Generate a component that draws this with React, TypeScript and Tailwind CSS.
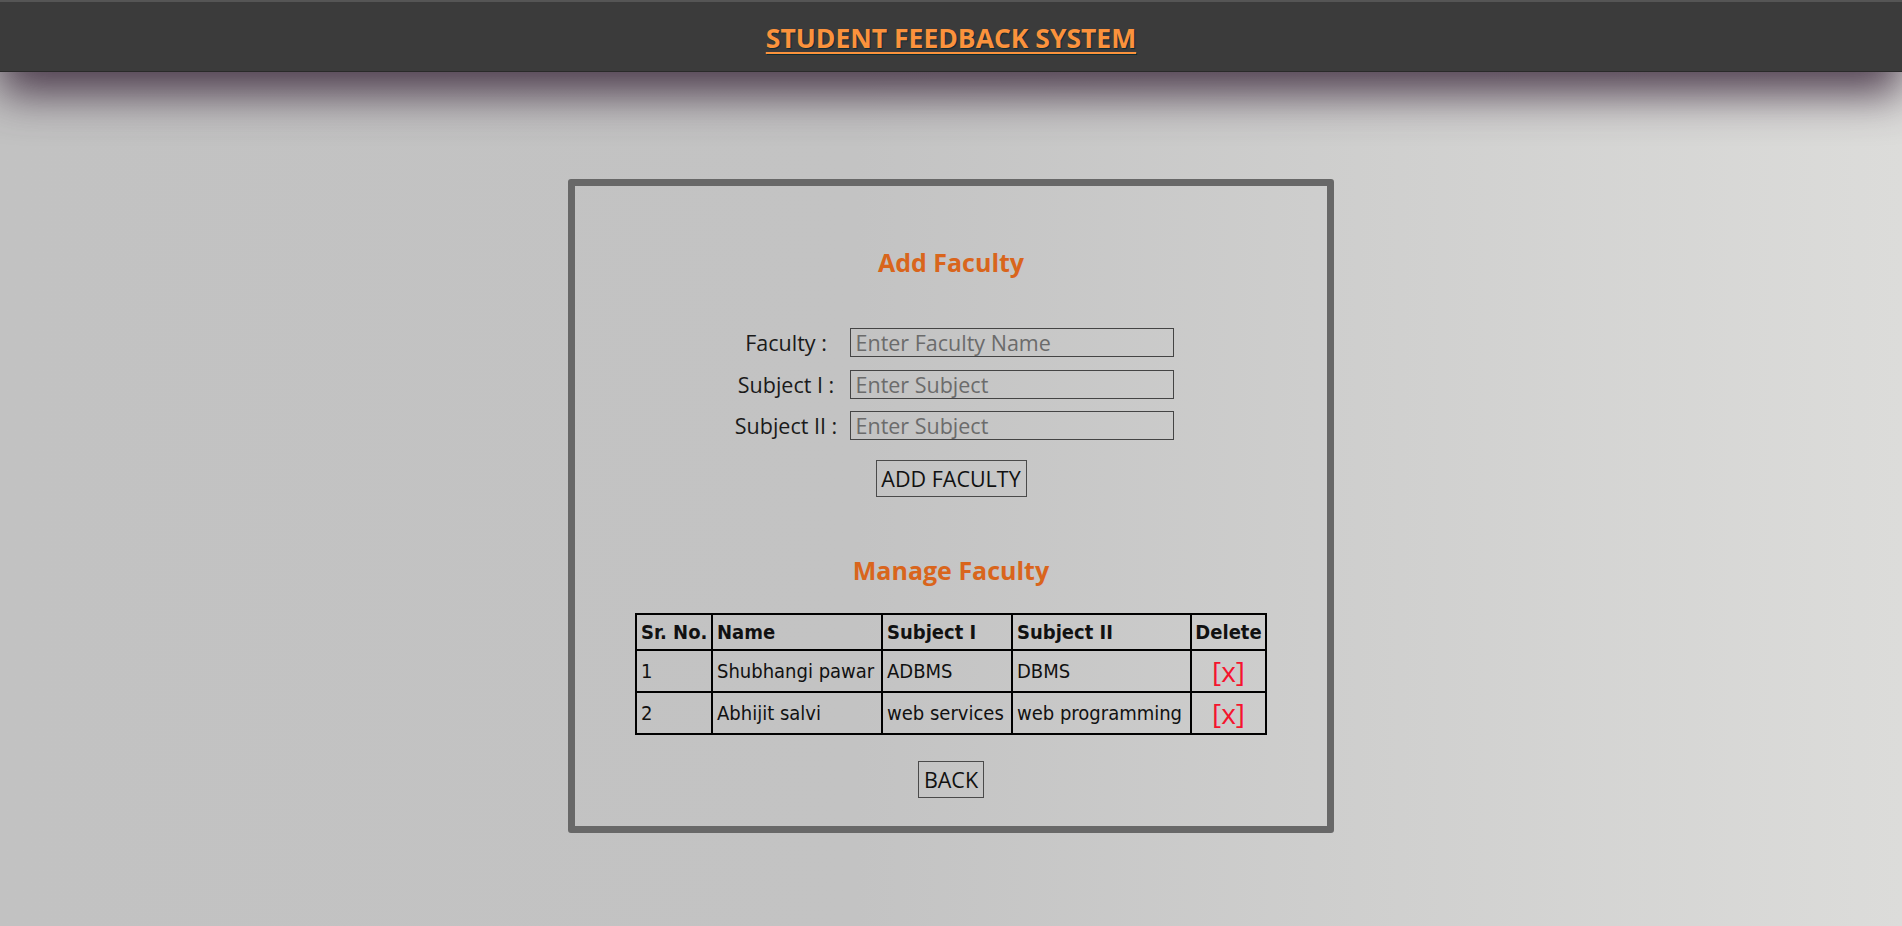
import React from "react";

const rows = [
  { n: "1", name: "Shubhangi pawar", s1: "ADBMS", s2: "DBMS" },
  { n: "2", name: "Abhijit salvi", s1: "web services", s2: "web programming" },
];

export default function App() {
  return (
    <div className="min-h-[926px] w-full bg-[linear-gradient(to_right,#c2c2c2_0%,#c3c3c3_45%,#dcdcda_100%)] font-['Open_Sans',sans-serif] overflow-hidden">
      <header className="relative z-10 h-[72px] bg-[#3b3b3b] border-t-[2px] border-t-[#555555] border-b border-b-[#2a2a2a] shadow-[0_22px_44px_rgba(58,38,58,0.85)] flex items-center justify-center">
        <h1 className="text-[26.5px] leading-[35px] font-bold text-[#fb923c] underline decoration-2 underline-offset-[4px] [text-shadow:1px_1px_1px_#0d2a30] mt-[4px]">
          STUDENT FEEDBACK SYSTEM
        </h1>
      </header>

      <main className="flex justify-center">
        <section className="mt-[107px] w-[766px] border-[7px] border-[#686868] rounded-[3px] flex flex-col items-center pb-[28px]">
          <h2 className="mt-[59px] text-[25px] leading-[34px] font-bold text-[#d9651c]">Add Faculty</h2>

          <div className="mt-[49px] grid grid-cols-[115px_324px] gap-x-[6px] gap-y-[12.5px] items-center">
            <label className="text-center text-[21.5px] leading-[29px] text-[#1a1a1a] whitespace-nowrap">Faculty :</label>
            <input
              placeholder="Enter Faculty Name"
              className="h-[29px] w-[324px] border border-[#444444] bg-transparent px-[5px] text-[21.5px] leading-[27px] text-[#222] placeholder:text-[#6b6b6b] outline-none"
            />
            <label className="text-center text-[21.5px] leading-[29px] text-[#1a1a1a] whitespace-nowrap">Subject I :</label>
            <input
              placeholder="Enter Subject"
              className="h-[29px] w-[324px] border border-[#444444] bg-transparent px-[5px] text-[21.5px] leading-[27px] text-[#222] placeholder:text-[#6b6b6b] outline-none"
            />
            <label className="text-center text-[21.5px] leading-[29px] text-[#1a1a1a] whitespace-nowrap">Subject II :</label>
            <input
              placeholder="Enter Subject"
              className="h-[29px] w-[324px] border border-[#444444] bg-transparent px-[5px] text-[21.5px] leading-[27px] text-[#222] placeholder:text-[#6b6b6b] outline-none"
            />
          </div>

          <button className="mt-[20px] h-[37px] w-[151px] border border-[#4a4a4a] bg-transparent text-[21.5px] leading-[29px] text-[#111] flex items-center justify-center whitespace-nowrap">
            ADD FACULTY
          </button>

          <h2 className="mt-[56px] text-[25px] leading-[34px] font-bold text-[#d9651c]">Manage Faculty</h2>

          <table className="mt-[26px] w-[630px] table-fixed border-collapse border-2 border-black font-['DejaVu_Sans_Condensed','DejaVu_Sans',sans-serif] [font-stretch:semi-condensed] text-[20px] leading-[24px] text-[#111]">
            <colgroup>
              <col className="w-[76px]" />
              <col className="w-[170px]" />
              <col className="w-[130px]" />
              <col className="w-[179px]" />
              <col className="w-[75px]" />
            </colgroup>
            <thead>
              <tr className="h-[36px]">
                <th className="border-2 border-black px-[4px] py-0 text-left font-bold whitespace-nowrap">Sr. No.</th>
                <th className="border-2 border-black px-[4px] py-0 text-left font-bold whitespace-nowrap">Name</th>
                <th className="border-2 border-black px-[4px] py-0 text-left font-bold whitespace-nowrap">Subject I</th>
                <th className="border-2 border-black px-[4px] py-0 text-left font-bold whitespace-nowrap">Subject II</th>
                <th className="border-2 border-black px-[2px] py-0 text-center font-bold whitespace-nowrap">Delete</th>
              </tr>
            </thead>
            <tbody>
              {rows.map((r) => (
                <tr key={r.n} className="h-[42px]">
                  <td className="border-2 border-black px-[4px] py-0 whitespace-nowrap">{r.n}</td>
                  <td className="border-2 border-black px-[4px] py-0 whitespace-nowrap">{r.name}</td>
                  <td className="border-2 border-black px-[4px] py-0 whitespace-nowrap">{r.s1}</td>
                  <td className="border-2 border-black px-[4px] py-0 whitespace-nowrap">{r.s2}</td>
                  <td className="border-2 border-black px-[2px] py-0 text-center font-['Open_Sans',sans-serif] [font-stretch:normal] text-[28px] leading-[34px] text-[#f5142e]">
                    [x]
                  </td>
                </tr>
              ))}
            </tbody>
          </table>

          <button className="mt-[26px] h-[37px] w-[66px] border border-[#4a4a4a] bg-transparent text-[21.5px] leading-[29px] text-[#111] flex items-center justify-center">
            BACK
          </button>
        </section>
      </main>
    </div>
  );
}
